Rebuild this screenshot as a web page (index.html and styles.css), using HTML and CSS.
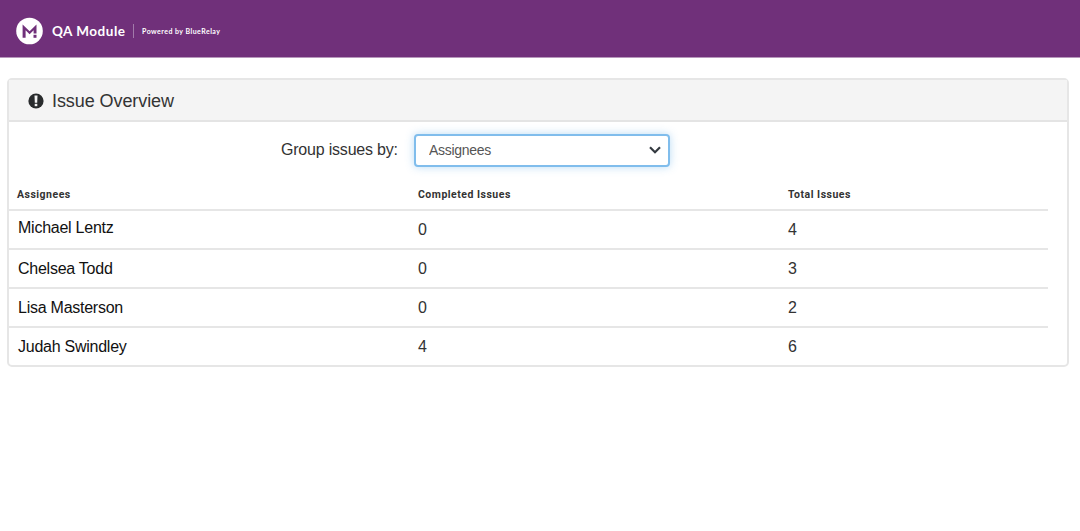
FILE: index.html
```html
<!DOCTYPE html>
<html lang="en">
<head>
  <meta charset="utf-8">
  <title>QA Module</title>
  <link rel="stylesheet" href="styles.css">
</head>
<body>
  <div class="header">
    <svg class="logo" viewBox="0 0 27 27" width="27" height="27">
      <circle cx="13.5" cy="13" r="13.3" fill="#fff"/>
      <path d="M6.6 19.8V6.4l7 6.8 6.9-6.8v9h-2.9v-3.2l-4 4.1-4-4.1v7.6z" fill="#70307a"/>
      <rect x="17.5" y="16.8" width="3" height="3" fill="#70307a"/>
    </svg>
    <span class="brand">QA Module</span>
    <span class="powered">Powered by BlueRelay</span>
  </div>

  <div class="panel">
    <div class="panel-heading">
      <svg class="alert-icon" viewBox="0 0 16 16" width="16" height="16">
        <circle cx="8" cy="8" r="7.6" fill="#292b2d"/>
        <path d="M6.5 2.4h3L9.2 9.7H6.8z" fill="#f4f4f4"/>
        <rect x="6.7" y="10.8" width="2.6" height="2.4" fill="#f4f4f4"/>
      </svg>
      <h1>Issue Overview</h1>
    </div>

    <div class="group-form">
      <label for="group">Group issues by:</label>
      <div class="select-wrap">
        <select id="group">
          <option>Assignees</option>
        </select>
        <svg class="chevron" viewBox="0 0 12 8" width="12" height="8">
          <path d="M1 1.2l5 5 5-5" fill="none" stroke="#343a40" stroke-width="2.2"/>
        </svg>
      </div>
    </div>

    <table>
      <thead>
        <tr><th class="name">Assignees</th><th class="completed">Completed Issues</th><th>Total Issues</th></tr>
      </thead>
      <tbody>
        <tr><td class="name raised">Michael Lentz</td><td>0</td><td>4</td></tr>
        <tr><td class="name">Chelsea Todd</td><td>0</td><td>3</td></tr>
        <tr><td class="name">Lisa Masterson</td><td>0</td><td>2</td></tr>
        <tr><td class="name">Judah Swindley</td><td>4</td><td>6</td></tr>
      </tbody>
    </table>
  </div>
</body>
</html>
```

FILE: styles.css
```css
* {
  box-sizing: border-box;
}

body {
  margin: 0;
  background: #fff;
  color: #333;
  font-family: "Liberation Sans", Arial, sans-serif;
}

.header {
  display: flex;
  align-items: center;
  height: 58px;
  padding: 5px 16px 0;
  background: #70307a;
  border-bottom: 1px solid #b697bb;
  color: #fff;
  font-family: Lato, sans-serif;
  font-weight: bold;
}

.logo {
  overflow: visible;
}

.brand {
  width: 82px;
  margin-left: 9px;
  font-size: 13.5px;
  letter-spacing: 0.5px;
  line-height: 14px;
  border-right: 1px solid #a27aaa;
  white-space: nowrap;
}

.powered {
  margin-left: 8px;
  font-size: 7px;
  letter-spacing: 0.46px;
}

.panel {
  width: 1062px;
  height: 289px;
  margin: 20px 0 0 7px;
  border: 2px solid #e6e6e6;
  border-radius: 5px;
}

.panel-heading {
  display: flex;
  align-items: center;
  height: 42px;
  padding-left: 19px;
  background: #f4f4f4;
  border-bottom: 2px solid #e4e4e4;
}

.alert-icon {
  margin-top: 1px;
}

.panel-heading h1 {
  margin: 2px 0 0 8px;
  font-size: 18px;
  font-weight: normal;
  letter-spacing: -0.08px;
}

.group-form {
  display: flex;
  align-items: center;
  height: 56px;
  padding-left: 272px;
}

.group-form label {
  width: 133px;
  font-size: 16px;
  letter-spacing: -0.2px;
}

.select-wrap {
  position: relative;
}

.select-wrap select {
  display: block;
  width: 256px;
  height: 33px;
  padding: 0 13px;
  appearance: none;
  background: #fff;
  border: 2px solid #80bdec;
  border-radius: 4px;
  box-shadow: 0 0 9px rgba(102, 175, 233, 0.45);
  color: #555;
  font-family: inherit;
  font-size: 14px;
  letter-spacing: -0.3px;
}

.chevron {
  position: absolute;
  top: 12px;
  right: 9px;
}

table {
  width: 1039px;
  border-collapse: separate;
  border-spacing: 0;
  table-layout: fixed;
}

th,
td {
  height: 39px;
  padding: 0;
  text-align: left;
}

th {
  height: 31px;
  padding-top: 1px;
  font-family: Roboto, sans-serif;
  font-size: 10.5px;
  letter-spacing: 0.5px;
}

th.name {
  width: 409px;
  padding-left: 8px;
}

th.completed {
  width: 370px;
}

td {
  border-top: 2px solid #e6e6e6;
  font-size: 16px;
}

td.name {
  padding-left: 9px;
  color: #111;
  letter-spacing: -0.25px;
}

td.raised {
  padding-bottom: 3px;
}
```
